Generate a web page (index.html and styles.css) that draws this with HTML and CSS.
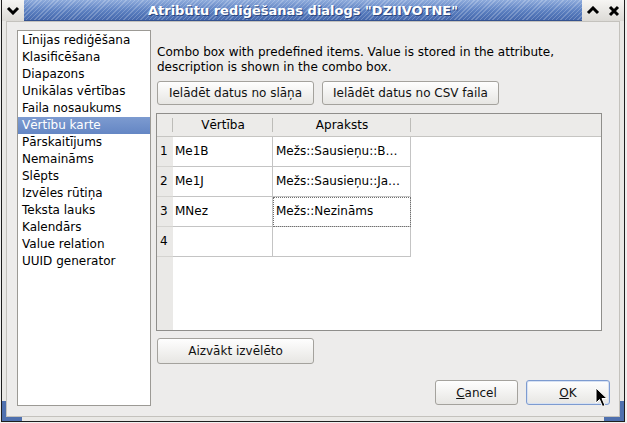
FILE: index.html
```html
<!DOCTYPE html>
<html lang="lv">
<head>
    <meta charset="UTF-8">
    <title>Atribūtu rediģēšanas dialogs</title>
    <link rel="stylesheet" href="styles.css">
</head>
<body>
    <div class="window">
        <!-- Window title bar -->
        <div class="titlebar">
            <div class="title-button menu-button">
                <svg width="14" height="9" viewBox="0 0 14 9"><path d="M2 2 L7 7 L12 2"/></svg>
            </div>
            <div class="title-caption">Atribūtu rediģēšanas dialogs "DZIIVOTNE"</div>
            <div class="title-button">
                <svg width="14" height="9" viewBox="0 0 14 9"><path d="M2 7 L7 2 L12 7"/></svg>
            </div>
            <div class="title-button">
                <svg width="12" height="12" viewBox="0 0 12 12"><path d="M2 2 L10 10 M10 2 L2 10"/></svg>
            </div>
        </div>

        <div class="client">
            <!-- Edit widget types -->
            <ul class="widget-list">
                <li>Līnijas rediģēšana</li>
                <li>Klasificēšana</li>
                <li>Diapazons</li>
                <li>Unikālas vērtības</li>
                <li>Faila nosaukums</li>
                <li class="selected">Vērtību karte</li>
                <li>Pārskaitījums</li>
                <li>Nemaināms</li>
                <li>Slēpts</li>
                <li>Izvēles rūtiņa</li>
                <li>Teksta lauks</li>
                <li>Kalendārs</li>
                <li>Value relation</li>
                <li>UUID generator</li>
            </ul>

            <!-- Value map page -->
            <div class="config-panel">
                <p class="description">Combo box with predefined items. Value is stored in the attribute,<br>description is shown in the combo box.</p>

                <div class="load-row">
                    <button class="btn btn-layer">Ielādēt datus no slāņa</button>
                    <button class="btn btn-csv">Ielādēt datus no CSV faila</button>
                </div>

                <div class="value-table">
                    <div class="table-head">
                        <div class="head-corner"></div>
                        <div class="col-value">Vērtība</div>
                        <div class="col-desc">Apraksts</div>
                    </div>
                    <div class="table-row">
                        <div class="row-num">1</div>
                        <div class="cell col-value">Me1B</div>
                        <div class="cell col-desc">Mežs::Sausieņu::B…</div>
                    </div>
                    <div class="table-row">
                        <div class="row-num">2</div>
                        <div class="cell col-value">Me1J</div>
                        <div class="cell col-desc">Mežs::Sausieņu::Ja…</div>
                    </div>
                    <div class="table-row">
                        <div class="row-num">3</div>
                        <div class="cell col-value">MNez</div>
                        <div class="cell col-desc current">Mežs::Nezināms</div>
                    </div>
                    <div class="table-row">
                        <div class="row-num">4</div>
                        <div class="cell col-value"></div>
                        <div class="cell col-desc"></div>
                    </div>
                </div>

                <button class="btn btn-remove">Aizvākt izvēlēto</button>

                <div class="dialog-buttons">
                    <button class="btn btn-cancel"><u>C</u>ancel</button>
                    <button class="btn btn-ok default"><u>O</u>K</button>
                </div>
            </div>
        </div>

        <!-- Resize grips in the frame corners -->
        <div class="grip grip-left"></div>
        <div class="grip grip-right"></div>

        <!-- Mouse pointer -->
        <svg class="pointer" width="13" height="21" viewBox="0 0 13 21">
            <path d="M1 1 L1 16 L4.5 12.5 L7.5 19.5 L10 18.5 L7 11.5 L12 11.5 Z"/>
        </svg>
    </div>
</body>
</html>
```

FILE: styles.css
```css
body {
    margin: 0;
    background: #f0f0ef;
    font-family: "DejaVu Sans", sans-serif;
    font-size: 12px;
    color: #000;
}

.window {
    width: 624px;
    height: 422px;
    margin-left: 1px;
    box-sizing: border-box;
    border: 1px solid #1e1e1e;
    border-top: none;
    background: #e9e8e5;
    display: flex;
    flex-direction: column;
    position: relative;
}

/* Title bar */
.titlebar {
    height: 21px;
    display: flex;
    flex-shrink: 0;
}
.title-button {
    width: 21px;
    display: flex;
    align-items: center;
    justify-content: center;
    background: linear-gradient(#f6f5f3, #dcdad6);
}
.title-button svg path {
    fill: none;
    stroke: #000;
    stroke-width: 3;
}
.menu-button {
    width: 22px;
}
.title-caption {
    flex: 1;
    line-height: 21px;
    text-align: center;
    color: #fff;
    font-weight: bold;
    font-size: 13px;
    text-shadow: 1px 1px 0 #2a4680;
    white-space: nowrap;
    background:
        repeating-linear-gradient(135deg, rgba(255,255,255,0.22) 0 1px, transparent 1px 3px),
        linear-gradient(#8eabdc, #5b7fc0 55%, #4669ad);
    border-bottom: 1px solid #34528f;
    box-sizing: border-box;
}

/* Client area */
.client {
    flex: 1;
    margin: 0 4px 4px 4px;
    border: 1px solid #c4c2bd;
    background: #edeceb;
    display: flex;
    padding: 8px 9px 10px 10px;
}

.widget-list {
    width: 132px;
    margin: 0;
    padding: 1px 0 0;
    list-style: none;
    border: 1px solid #9c9a95;
    background: #fff;
}
.widget-list li {
    height: 17px;
    line-height: 17px;
    padding-left: 4px;
    white-space: nowrap;
}
.widget-list li.selected {
    background: linear-gradient(#7d9bd0, #6486c4);
    color: #fff;
}

.config-panel {
    flex: 1;
    margin-left: 5px;
    display: flex;
    flex-direction: column;
}
.description {
    margin: 15px 0 0 1px;
    line-height: 15px;
}

/* Push buttons */
.btn {
    font: inherit;
    color: #111;
    height: 24px;
    padding: 0;
    border: 1px solid #a4a29d;
    border-radius: 3px;
    background: linear-gradient(#fefefe, #e7e6e3);
    box-sizing: border-box;
}
.load-row {
    display: flex;
    gap: 8px;
    margin: 6px 0 0 1px;
}
.btn-layer {
    width: 157px;
}
.btn-csv {
    width: 177px;
}
.btn-remove {
    width: 157px;
    height: 26px;
    margin: 7px 0 0 1px;
}
.dialog-buttons {
    margin-top: auto;
    margin-bottom: 1px;
    display: flex;
    justify-content: flex-end;
    gap: 8px;
}
.btn-cancel {
    width: 83px;
    height: 25px;
}
.btn-ok {
    width: 84px;
    height: 25px;
}
.btn.default {
    border-color: #7d9bd0;
    box-shadow: inset 0 0 0 1px #d6e1f3;
}

/* Value map table */
.value-table {
    width: 446px;
    height: 218px;
    margin-top: 8px;
    box-sizing: border-box;
    border: 1px solid #8f8e8b;
    background: linear-gradient(to right, #eae9e7 16px, #fff 16px);
}
.table-head {
    display: flex;
    height: 23px;
    box-sizing: border-box;
    background: #ecebe9;
    border-bottom: 1px solid #c6c5c2;
}
.table-head div {
    box-sizing: border-box;
    line-height: 22px;
    text-align: center;
    background: linear-gradient(#bdbcb8, #bdbcb8) right center / 1px 14px no-repeat;
}
.head-corner {
    width: 16px;
}
.col-value {
    width: 100px;
}
.col-desc {
    width: 138px;
}
.table-row {
    display: flex;
    height: 30px;
}
.row-num {
    width: 16px;
    box-sizing: border-box;
    padding-left: 3px;
    line-height: 29px;
    border-bottom: 1px solid #d4d3d0;
}
.cell {
    box-sizing: border-box;
    padding-left: 2px;
    line-height: 29px;
    white-space: nowrap;
    overflow: hidden;
    border-right: 1px solid #c4c4c4;
    border-bottom: 1px solid #c4c4c4;
}
.cell.col-desc {
    padding-left: 3px;
}
.cell.current {
    outline: 1px dotted #707070;
    outline-offset: -1px;
}

/* Frame decorations */
.grip {
    position: absolute;
    bottom: 0;
    width: 16px;
    height: 16px;
    border-bottom: 4px solid #4f70ae;
}
.grip-left {
    left: 0;
    border-left: 4px solid #4f70ae;
}
.grip-right {
    right: 0;
    border-right: 4px solid #4f70ae;
}
.pointer {
    position: absolute;
    left: 593px;
    top: 387px;
}
.pointer path {
    fill: #000;
    stroke: #fff;
    stroke-width: 1;
}
```
